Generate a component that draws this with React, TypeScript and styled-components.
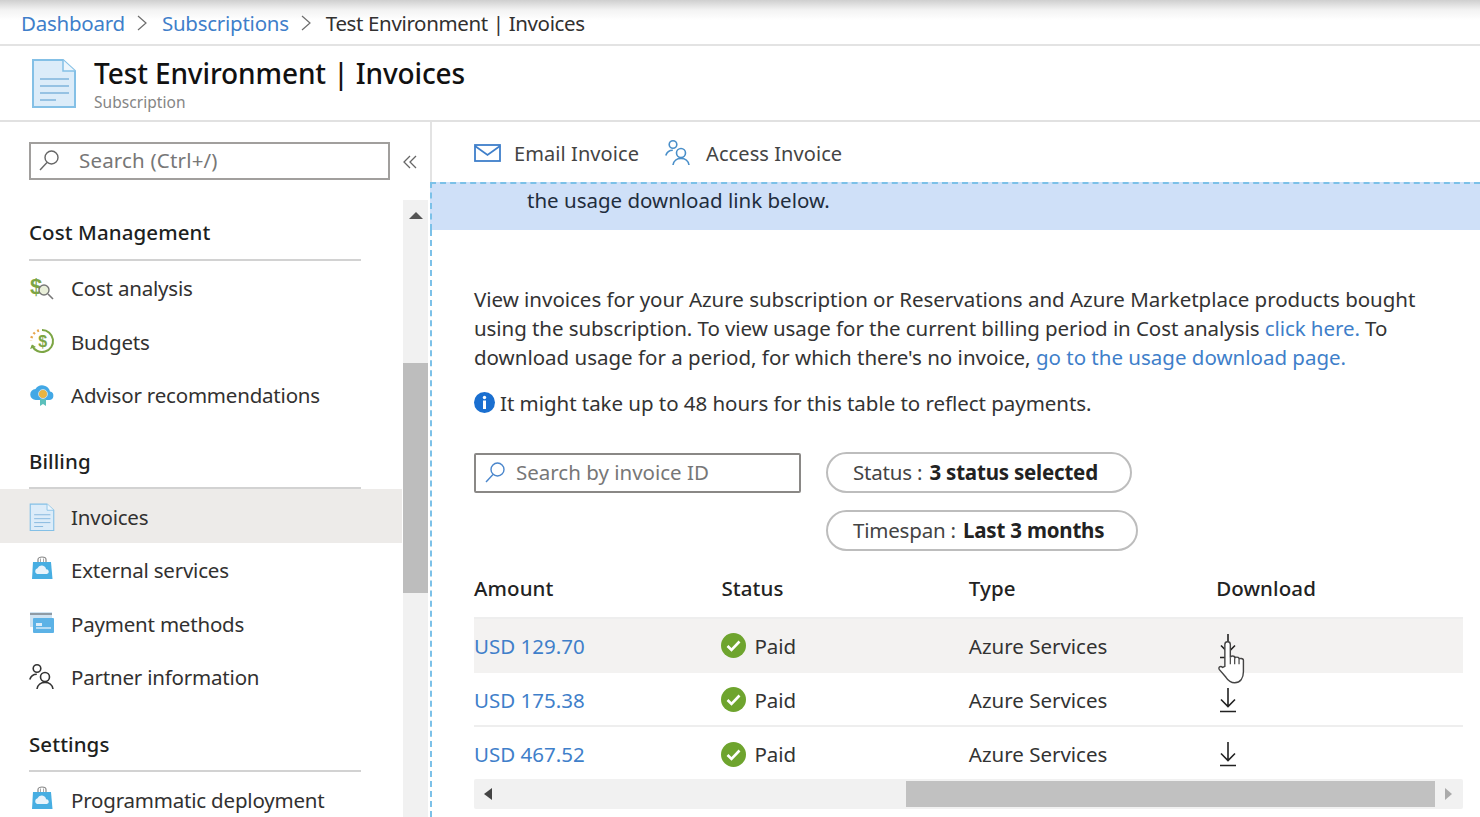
import React from "react";
import styled, { createGlobalStyle } from "styled-components";

const Global = createGlobalStyle`
  html, body { margin: 0; padding: 0; background: #fff; }
  body { font-family: "Noto Sans", "Open Sans", "Liberation Sans", sans-serif; color: #323130; }
  #root { width: 1480px; height: 817px; overflow: hidden; }
  * { box-sizing: border-box; }
`;

const Page = styled.div`
  width: 1480px; height: 817px; display: flex; flex-direction: column; overflow: hidden; background: #fff;
`;
const Crumbs = styled.nav`
  height: 46px; flex: none; display: flex; align-items: center; padding: 1px 0 0 21px; font-size: 20.5px; letter-spacing: -0.36px;
  border-bottom: 2px solid #e3e3e3; background: linear-gradient(#cfcfcf 0, #f3f3f3 10px, #fff 20px);
`;
const CrumbLink = styled.span`color: #3f7fca; letter-spacing: -0.25px;`;
const CrumbText = styled.span`color: #323130;`;
const CrumbSep = styled.svg`width: 12px; height: 18px; margin: 0 14px 0 11px; fill: none; stroke: #6d6d6d; stroke-width: 1.2;`;
const Header = styled.header`
  height: 76px; flex: none; display: flex; align-items: flex-start; padding: 12px 0 0 31px; border-bottom: 2px solid #e1e1e1;
`;
const HeaderIcon = styled.svg`width: 46px; height: 50px; margin-right: 17px; flex: none;`;
const TitleBlock = styled.div`display: flex; flex-direction: column;`;
const Title = styled.h1`margin: 0; font-size: 28px; line-height: 30px; font-weight: 500; color: #111; letter-spacing: -0.11px;`;
const Sub = styled.div`font-size: 15.5px; line-height: 24px; margin-top: 2px; color: #858585; letter-spacing: 0.05px;`;
const Body = styled.div`flex: 1; display: flex; min-height: 0;`;
const Side = styled.aside`
  width: 430px; flex: none; display: flex; flex-direction: column; overflow: hidden;
`;
const SideTop = styled.div`height: 78px; flex: none; display: flex; align-items: flex-start; padding: 20px 0 0 29px;`;
const SearchBox = styled.div`
  width: 361px; height: 38px; border: 2px solid #a19f9d; display: flex; align-items: center; padding: 0 0 2px 6px;
  color: #777; font-size: 20.5px; letter-spacing: 0.18px;
`;
const Glass = styled.svg`width: 24px; height: 24px; flex: none; margin-right: 18px; fill: none; stroke-width: 1.4;`;
const Collapse = styled.svg`width: 14px; height: 14px; margin: 13px 0 0 13px; fill: none; stroke: #666; stroke-width: 1.3;`;
const SideMain = styled.div`flex: 1; display: flex; min-height: 0;`;
const Nav = styled.div`width: 402px; flex: none;`;
const SectionHead = styled.div<{ $h: number; $pt: number }>`
  margin: 0 41px 0 29px; height: ${p => p.$h}px; padding-top: ${p => p.$pt}px; border-bottom: 2px solid #d2d2d2;
  font-size: 20.5px; line-height: 28px; font-weight: 500; color: #201f1e; letter-spacing: 0.08px;
`;
const Item = styled.div<{ $h?: number; $active?: boolean }>`
  height: ${p => p.$h || 53.6}px; display: flex; align-items: center; padding: ${p => (p.$active ? "2px" : "0")} 0 0 29px;
  background: ${p => (p.$active ? "#edebe9" : "transparent")}; font-size: 20.5px; letter-spacing: -0.2px; color: #323130;
`;
const ItemIcon = styled.svg`width: 26px; height: 28px; flex: none; margin-right: 16px;`;
const VBar = styled.div`width: 25px; flex: none; margin-left: 1px; background: #f1f1f1; display: flex; flex-direction: column; align-items: center; height: 620px;`;
const VUp = styled.div`
  width: 0; height: 0; margin-top: 12px; border-left: 7px solid transparent; border-right: 7px solid transparent; border-bottom: 7px solid #555;
`;
const VThumb = styled.div`width: 25px; height: 230px; margin-top: 144px; background: #bdbdbd;`;
const Main = styled.main`flex: 1; min-width: 0; display: flex; flex-direction: column; overflow: hidden;`;
const Toolbar = styled.div`
  height: 60px; flex: none; display: flex; align-items: center; padding: 2px 0 0 42px; font-size: 20px; letter-spacing: 0.08px; color: #444;
  border-left: 2px solid #e3e3e3;
`;
const ToolIcon = styled.svg`flex: none; fill: none; stroke-width: 1.8; margin-right: ${p => p.$mr}px;`;
const ToolItem = styled.div`display: flex; align-items: center; margin-right: 26px;`;
const Banner = styled.div`
  height: 48px; flex: none; background: #cfe0f8; border-top: 2px dashed #7cc1e8; border-left: 2px dashed #7cc1e8; padding: 1px 0 0 95px;
  font-size: 20.5px; line-height: 30px; color: #1f2d3d; letter-spacing: 0;
`;
const Content = styled.div`flex: 1; border-left: 2px dashed #7cc1e8; padding: 55px 0 0 42px; min-height: 0;`;
const Para = styled.p`margin: 0; font-size: 20.5px; line-height: 29.2px; color: #333; letter-spacing: -0.02px; width: 960px;`;
const Tight = styled.span`letter-spacing: -0.065px;`;
const Loose = styled.span`letter-spacing: 0px;`;
const A = styled.span`color: #3f7fca;`;
const Note = styled.div`display: flex; align-items: center; margin-top: 15px; height: 30px; font-size: 20.5px; color: #333; letter-spacing: -0.04px;`;
const InfoIcon = styled.svg`width: 21px; height: 21px; margin-right: 5px; flex: none;`;
const Filters = styled.div`display: flex; align-items: flex-start; margin-top: 34px; height: 118px;`;
const InvoiceSearch = styled.div`
  width: 327px; height: 40px; margin-top: 1px; border: 2px solid #8a8886; border-radius: 2px; display: flex; align-items: center; padding: 0 0 1px 7px;
  font-size: 20.5px; color: #777; letter-spacing: 0;
`;
const GlassSmall = styled(Glass)`margin-right: 9px;`;
const Pills = styled.div`display: flex; flex-direction: column; align-items: flex-start; gap: 17px; margin-left: 25px;`;
const Pill = styled.div`
  height: 41px; border: 2px solid #bdbdbd; border-radius: 21px; display: flex; align-items: center; padding: 0 32px 0 25px;
  font-size: 20.5px; color: #444; letter-spacing: -0.2px; white-space: pre;
  b { font-weight: 700; color: #222; margin-left: 2px; }
`;
const Table = styled.div`width: 989px; display: flex; flex-direction: column;`;
const Row = styled.div<{ $h: number; $hover?: boolean; $line?: boolean; $pt: number }>`
  display: grid; grid-template-columns: 247.4px 247.4px 247.4px 1fr; align-items: center; height: ${p => p.$h}px;
  padding-top: ${p => p.$pt}px;
  background: ${p => (p.$hover ? "#f3f2f1" : "transparent")};
  border-bottom: ${p => (p.$line ? "2px solid #eeeeee" : "none")};
  font-size: 20.5px; color: #333; letter-spacing: 0; position: relative;
`;
const HeadRow = styled.div`
  display: grid; grid-template-columns: 247.4px 247.4px 247.4px 1fr; align-items: center; height: 49px; padding-bottom: 11px;
  border-bottom: 2px solid #eeeeee; font-size: 20.5px; letter-spacing: 0.1px;
`;
const Th = styled.div`font-weight: 500; color: #222;`;
const Amount = styled.span`color: #3f7fca;`;
const StatusCell = styled.div`display: flex; align-items: center;`;
const Check = styled.svg`width: 25px; height: 25px; margin-right: 8px; flex: none;`;
const DownIcon = styled.svg`width: 24px; height: 28px; display: block; fill: none; stroke: #222; stroke-width: 1.6;`;
const Hand = styled.svg`position: absolute; left: 741px; top: 19px; width: 35px; height: 48px;`;
const HBar = styled.div`height: 30px; background: #f1f1f1; border-radius: 2px; display: flex; align-items: center; padding: 0 10px;`;
const HLeft = styled.div`width: 0; height: 0; border-top: 6.5px solid transparent; border-bottom: 6.5px solid transparent; border-right: 8px solid #444;`;
const HThumb = styled.div`width: 529px; height: 26px; margin-left: 414px; background: #c1c1c1;`;
const HRight = styled.div`width: 0; height: 0; margin-left: 10px; border-top: 6.5px solid transparent; border-bottom: 6.5px solid transparent; border-left: 7px solid #aaa;`;

const Doc = () => (
  <>
    <path d="M2 2h30l12 11v36H2z" fill="#dcecf9" stroke="#84c0e6" strokeWidth="2" />
    <path d="M32 2v11h12" fill="#eef6fc" stroke="#84c0e6" strokeWidth="1.5" />
    <path d="M9 21h29M9 28h29M9 35h29M9 42h16" stroke="#7fb4dc" strokeWidth="1.6" />
  </>
);
const Bag = () => (
  <>
    <path d="M9 6V3.5C9 2 11 1 13 1s4 1 4 2.5V6" fill="none" stroke="#888" strokeWidth="1.2" />
    <path d="M11.5 6V2.5M14.5 6V2.5" stroke="#aaa" strokeWidth="1" />
    <path d="M4 6h18l1.5 17H3z" fill="#47aee2" />
    <path d="M8 18a3 3 0 0 1 .5-5.7 4.5 4.5 0 0 1 8.6 1A2.4 2.4 0 0 1 18 18z" fill="#e8f3fb" />
  </>
);
const People = ({ c }: { c: string }) => (
  <g fill="none" stroke={c} strokeWidth="1.6">
    <circle cx="8" cy="5.500" r="3.800" />
    <path d="M.8 16.500c1-3.400 3.500-5.300 7-5.300" />
    <circle cx="16" cy="14" r="4.500" />
    <path d="M8 26c.6-4.200 4-6.600 8-6.600s7.400 2.400 8 6.600" />
  </g>
);
const GlassPath = () => (
  <>
    <circle cx="14.500" cy="9.500" r="6.500" />
    <path d="M10 14.500L3 22" />
  </>
);
const Sep = () => (
  <CrumbSep viewBox="0 0 12 18"><path d="M2 2l8 7-8 7" /></CrumbSep>
);
const Down = () => (
  <DownIcon viewBox="0 0 24 28">
    <path d="M12 2v18M5 13.500l7 7 7-7M4 25.500h16" />
  </DownIcon>
);
const CheckMark = () => (
  <Check viewBox="0 0 25 25">
    <circle cx="12.500" cy="12.500" r="12.500" fill="#6ea42e" />
    <path d="M6.500 13l4 4 8-8.500" fill="none" stroke="#fff" strokeWidth="2.600" />
  </Check>
);

const rows = [
  { amount: "USD 129.70", h: 54, pt: 0, hover: true },
  { amount: "USD 175.38", h: 54, pt: 2, line: true },
  { amount: "USD 467.52", h: 52, pt: 3 },
];

export default function App() {
  return (
    <Page>
      <Global />
      <Crumbs>
        <CrumbLink>Dashboard</CrumbLink>
        <Sep />
        <CrumbLink>Subscriptions</CrumbLink>
        <Sep />
        <CrumbText>Test Environment | Invoices</CrumbText>
      </Crumbs>
      <Header>
        <HeaderIcon viewBox="0 0 46 50"><Doc /></HeaderIcon>
        <TitleBlock>
          <Title>Test Environment | Invoices</Title>
          <Sub>Subscription</Sub>
        </TitleBlock>
      </Header>
      <Body>
        <Side>
          <SideTop>
            <SearchBox>
              <Glass viewBox="0 0 24 24" stroke="#666"><GlassPath /></Glass>
              Search (Ctrl+/)
            </SearchBox>
            <Collapse viewBox="0 0 14 14"><path d="M7 1L1 7l6 6M13 1L7 7l6 6" /></Collapse>
          </SideTop>
          <SideMain>
            <Nav>
              <SectionHead $h={61.4} $pt={18}>Cost Management</SectionHead>
              <Item>
                <ItemIcon viewBox="0 0 26 28">
                  <text x="1" y="20" fontSize="22" fontWeight="700" fill="#7ca544" fontFamily="Liberation Sans">$</text>
                  <circle cx="15" cy="16" r="5" fill="#e9efd9" stroke="#777" strokeWidth="1.400" />
                  <path d="M19 20l5 5" stroke="#777" strokeWidth="1.600" />
                </ItemIcon>
                Cost analysis
              </Item>
              <Item>
                <ItemIcon viewBox="0 0 26 28">
                  <path d="M13 2a11 11 0 1 1-10 15.500" fill="none" stroke="#7ca544" strokeWidth="2" />
                  <path d="M1 21l2-4.500 4 2.500z" fill="#7ca544" />
                  <path d="M10 2.500A11 11 0 0 0 2 13" fill="none" stroke="#e8a64c" strokeWidth="2.500" strokeDasharray="2 2.600" />
                  <text x="13.500" y="19" fontSize="16" fontWeight="700" textAnchor="middle" fill="#7ca544" fontFamily="Liberation Sans">$</text>
                </ItemIcon>
                Budgets
              </Item>
              <Item>
                <ItemIcon viewBox="0 0 26 28">
                  <path d="M7 19a5.500 5.500 0 0 1-.5-11 8 8 0 0 1 14.500 2.500A4.300 4.300 0 0 1 20 19z" fill="#42a8e6" />
                  <path d="M11 18v7l3-2 3 2v-7" fill="#5cc0bc" />
                  <circle cx="14" cy="13" r="4.500" fill="#e8b440" stroke="#bcdcf0" strokeWidth="1" />
                </ItemIcon>
                Advisor recommendations
              </Item>
              <SectionHead $h={66.6} $pt={25}>Billing</SectionHead>
              <Item $active $h={54.4}>
                <ItemIcon viewBox="0 0 46 50"><Doc /></ItemIcon>
                Invoices
              </Item>
              <Item>
                <ItemIcon viewBox="0 0 26 28"><Bag /></ItemIcon>
                External services
              </Item>
              <Item>
                <ItemIcon viewBox="0 0 26 28">
                  <rect x="1" y="2" width="22" height="15" fill="#cfe3f2" />
                  <rect x="1" y="3" width="22" height="2" fill="#8f9ba5" />
                  <rect x="4" y="8" width="21" height="15" rx="1" fill="#5cb2e6" />
                  <path d="M7 13h6v3H7z" fill="#dcecf9" />
                  <path d="M7 18h15" stroke="#dcecf9" strokeWidth="1.400" />
                </ItemIcon>
                Payment methods
              </Item>
              <Item>
                <ItemIcon viewBox="0 0 26 28"><People c="#333" /></ItemIcon>
                Partner information
              </Item>
              <SectionHead $h={67.6} $pt={25.6}>Settings</SectionHead>
              <Item $h={56}>
                <ItemIcon viewBox="0 0 26 28"><Bag /></ItemIcon>
                Programmatic deployment
              </Item>
            </Nav>
            <VBar>
              <VUp />
              <VThumb />
            </VBar>
          </SideMain>
        </Side>
        <Main>
          <Toolbar>
            <ToolItem>
              <ToolIcon $mr={13} width="27" height="18" viewBox="0 0 27 18" stroke="#3f7fca">
                <rect x="1" y="1" width="25" height="16" />
                <path d="M1 2l12.500 9L26 2" />
              </ToolIcon>
              Email Invoice
            </ToolItem>
            <ToolItem>
              <ToolIcon $mr={14} width="27" height="28" viewBox="0 0 27 28"><People c="#4a8fc9" /></ToolIcon>
              Access Invoice
            </ToolItem>
          </Toolbar>
          <Banner>the usage download link below.</Banner>
          <Content>
            <Para>
              View invoices for your Azure subscription or Reservations and Azure Marketplace products bought <Tight>using the subscription. To view usage for the current billing period in Cost analysis <A>click here.</A> To</Tight> <Loose>download usage for a period, for which there's no invoice, <A>go to the usage download page.</A></Loose>
            </Para>
            <Note>
              <InfoIcon viewBox="0 0 21 21">
                <circle cx="10.500" cy="10.500" r="10.500" fill="#1a6fd0" />
                <circle cx="10.500" cy="5.500" r="1.700" fill="#fff" />
                <rect x="9" y="8.500" width="3" height="8.500" fill="#fff" />
              </InfoIcon>
              It might take up to 48 hours for this table to reflect payments.
            </Note>
            <Filters>
              <InvoiceSearch>
                <GlassSmall viewBox="0 0 24 24" stroke="#4a86cc"><GlassPath /></GlassSmall>
                Search by invoice ID
              </InvoiceSearch>
              <Pills>
                <Pill>Status : <b>3 status selected</b></Pill>
                <Pill>Timespan : <b>Last 3 months</b></Pill>
              </Pills>
            </Filters>
            <Table>
              <HeadRow>
                <Th>Amount</Th><Th>Status</Th><Th>Type</Th><Th>Download</Th>
              </HeadRow>
              {rows.map(r => (
                <Row key={r.amount} $h={r.h} $pt={r.pt} $hover={r.hover} $line={r.line}>
                  <Amount>{r.amount}</Amount>
                  <StatusCell><CheckMark />Paid</StatusCell>
                  <div>Azure Services</div>
                  <Down />
                  {r.hover && (
                    <Hand viewBox="0 0 32 44">
                      <path d="M9 26V6a2.500 2.500 0 0 1 5 0v12c0-2 4-2 4 0v1c0-2 4-2 4 0v1c0-2 4-1.500 4 .5V31c0 6-3 10-8 10-4 0-6-2-8-5l-6-7c-1.500-2 1-4 3-2z" fill="#fff" stroke="#444" strokeWidth="1.300" />
                      <path d="M14 18v6M18 19v5M22 20v4" stroke="#444" strokeWidth="1.100" />
                    </Hand>
                  )}
                </Row>
              ))}
              <HBar>
                <HLeft />
                <HThumb />
                <HRight />
              </HBar>
            </Table>
          </Content>
        </Main>
      </Body>
    </Page>
  );
}
